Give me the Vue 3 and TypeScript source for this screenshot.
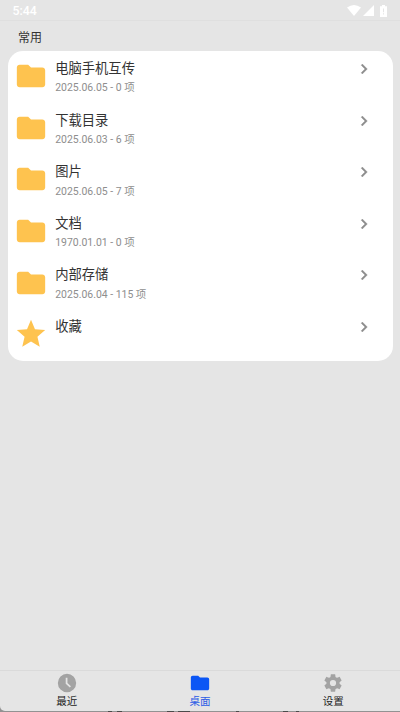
<script setup lang="ts">
interface Entry {
  title: string
  meta: string
  icon: 'folder' | 'star'
}

interface Tab {
  label: string
  icon: string
  active: boolean
}

const paths: Record<string, string> = {
  folder: 'M10 4H4c-1.1 0-1.99.9-1.99 2L2 18c0 1.1.9 2 2 2h16c1.1 0 2-.9 2-2V8c0-1.1-.9-2-2-2h-8l-2-2z',
  star: 'M12 17.27L18.18 21l-1.64-7.03L22 9.24l-7.19-.61L12 2 9.19 8.63 2 9.24l5.46 4.73L5.82 21z',
  chevron: 'M10 6L8.59 7.41 13.17 12l-4.58 4.59L10 18l6-6z',
  clock: 'M12 2a10 10 0 1 0 0 20 10 10 0 0 0 0-20zm3.1 14.8L10.6 12.9V6.2h1.9v5.9l3.8 3.4z',
  gear: 'M19.14 12.94c.04-.3.06-.61.06-.94 0-.32-.02-.64-.07-.94l2.03-1.58c.18-.14.23-.41.12-.61l-1.92-3.32c-.12-.22-.37-.29-.59-.22l-2.39.96c-.5-.38-1.03-.7-1.62-.94l-.36-2.54c-.04-.24-.24-.41-.48-.41h-3.84c-.24 0-.43.17-.47.41l-.36 2.54c-.59.24-1.13.57-1.62.94l-2.39-.96c-.22-.08-.47 0-.59.22L2.74 8.87c-.12.21-.08.47.12.61l2.03 1.58c-.05.3-.09.63-.09.94s.02.64.07.94l-2.03 1.58c-.18.14-.23.41-.12.61l1.92 3.32c.12.22.37.29.59.22l2.39-.96c.5.38 1.03.7 1.62.94l.36 2.54c.05.24.24.41.48.41h3.84c.24 0 .44-.17.47-.41l.36-2.54c.59-.24 1.13-.56 1.62-.94l2.39.96c.22.08.47 0 .59-.22l1.92-3.32c.12-.22.07-.47-.12-.61l-2.01-1.58zM12 15.4a3.4 3.4 0 1 1 0-6.8 3.4 3.4 0 0 1 0 6.8z',
}

const entries: Entry[] = [
  { title: '电脑手机互传', meta: '2025.06.05 - 0 项', icon: 'folder' },
  { title: '下载目录', meta: '2025.06.03 - 6 项', icon: 'folder' },
  { title: '图片', meta: '2025.06.05 - 7 项', icon: 'folder' },
  { title: '文档', meta: '1970.01.01 - 0 项', icon: 'folder' },
  { title: '内部存储', meta: '2025.06.04 - 115 项', icon: 'folder' },
  { title: '收藏', meta: '', icon: 'star' },
]

const tabs: Tab[] = [
  { label: '最近', icon: 'clock', active: false },
  { label: '桌面', icon: 'folder', active: true },
  { label: '设置', icon: 'gear', active: false },
]
</script>

<template>
  <div class="screen">
    <header class="status">
      <span class="time">5:44</span>
      <div class="indicators">
        <svg class="wifi" viewBox="0 0 14 11"><path d="M0 2.6Q7-2.4 14 2.6L7 11z" /></svg>
        <svg class="signal" viewBox="0 0 11 11"><path d="M11 0v11H0z" /></svg>
        <svg class="battery" viewBox="0 0 7 12">
          <path fill-rule="evenodd" d="M2 0h3v1.2h2V12H0V1.2h2zM3 3.5v3.8h1V3.5zM3 8.3v1.2h1V8.3z" />
        </svg>
      </div>
    </header>
    <main class="content">
      <h2 class="section">常用</h2>
      <ul class="card">
        <li v-for="entry in entries" :key="entry.title" class="row">
          <svg class="lead" viewBox="0 0 24 24"><path :d="paths[entry.icon]" /></svg>
          <div class="body">
            <div class="title">{{ entry.title }}</div>
            <div v-if="entry.meta" class="meta">{{ entry.meta }}</div>
          </div>
          <svg class="chevron" viewBox="0 0 24 24"><path :d="paths.chevron" /></svg>
        </li>
      </ul>
    </main>
    <nav class="tabs">
      <div v-for="tab in tabs" :key="tab.label" class="tab" :class="{ active: tab.active }">
        <svg class="tab-icon" viewBox="0 0 24 24"><path fill-rule="evenodd" :d="paths[tab.icon]" /></svg>
        <span>{{ tab.label }}</span>
      </div>
    </nav>
  </div>
  <svg class="edge" viewBox="0 0 400 1" preserveAspectRatio="none">
    <path d="M108 0h4v1h-4zM117 0h5v1h-5zM167 0h7v1h-7zM178 0h12v1h-12zM236 0h3v1h-3zM283 0h5v1h-5zM296 0h3v1h-3z" />
  </svg>
</template>

<style>
body {
  background: #929292;
}
</style>

<style scoped>
.screen {
  box-sizing: border-box;
  width: 400px;
  height: 711px;
  display: flex;
  flex-direction: column;
  overflow: hidden;
  background: #e5e5e5;
  border-bottom-left-radius: 5px;
  font-family: Roboto, "Noto Sans CJK SC", sans-serif;
}
.edge {
  display: block;
  width: 400px;
  height: 1px;
  fill: #4a4a4a;
}
.status {
  box-sizing: border-box;
  height: 21px;
  padding: 1px 13px 0 12.5px;
  display: flex;
  align-items: center;
  justify-content: space-between;
  border-bottom: 1px solid #dfdfdf;
  color: #fff;
}
.time {
  padding-top: 1px;
  font-size: 12.3px;
  font-weight: 500;
  line-height: 19px;
}
.indicators {
  display: flex;
  align-items: center;
  fill: #fff;
}
.wifi {
  width: 14px;
  height: 11px;
  margin-right: 2px;
}
.signal {
  width: 11px;
  height: 11px;
  margin-right: 6px;
}
.battery {
  width: 7px;
  height: 12px;
}
.content {
  flex: 1;
  padding: 0 7.5px;
}
.section {
  margin: 0;
  height: 30px;
  padding-left: 10.5px;
  font-size: 12px;
  font-weight: 400;
  line-height: 34px;
  color: #333;
}
.card {
  margin: 0;
  padding: 0;
  list-style: none;
  background: #fff;
  border-radius: 15px;
}
.row {
  box-sizing: border-box;
  height: 51.6px;
  padding: 8px 18.5px 0 6.7px;
  display: flex;
  align-items: flex-start;
}
.lead {
  width: 34px;
  height: 34px;
  margin-top: 0.3px;
  fill: #fec34f;
}
.body {
  flex: 1;
  padding: 1px 0 0 7px;
}
.title {
  font-size: 13.3px;
  line-height: 18px;
  color: #333;
}
.meta {
  margin-top: 2.4px;
  font-size: 10.45px;
  line-height: 15px;
  color: #8e8e8e;
}
.chevron {
  width: 20px;
  height: 20px;
  fill: #8c8c8c;
  stroke: #8c8c8c;
  stroke-width: 0.4;
}
.tabs {
  box-sizing: border-box;
  height: 41px;
  display: flex;
  border-top: 1px solid #dadada;
}
.tab {
  flex: 1;
  padding-top: 1px;
  display: flex;
  flex-direction: column;
  align-items: center;
  font-size: 10.5px;
  line-height: 16px;
  color: #1c1c1c;
  fill: #a3a3a3;
}
.tab.active {
  color: #2c5ce6;
  fill: #0b56f5;
}
.tab-icon {
  flex: none;
  width: 22px;
  height: 22px;
}
</style>
